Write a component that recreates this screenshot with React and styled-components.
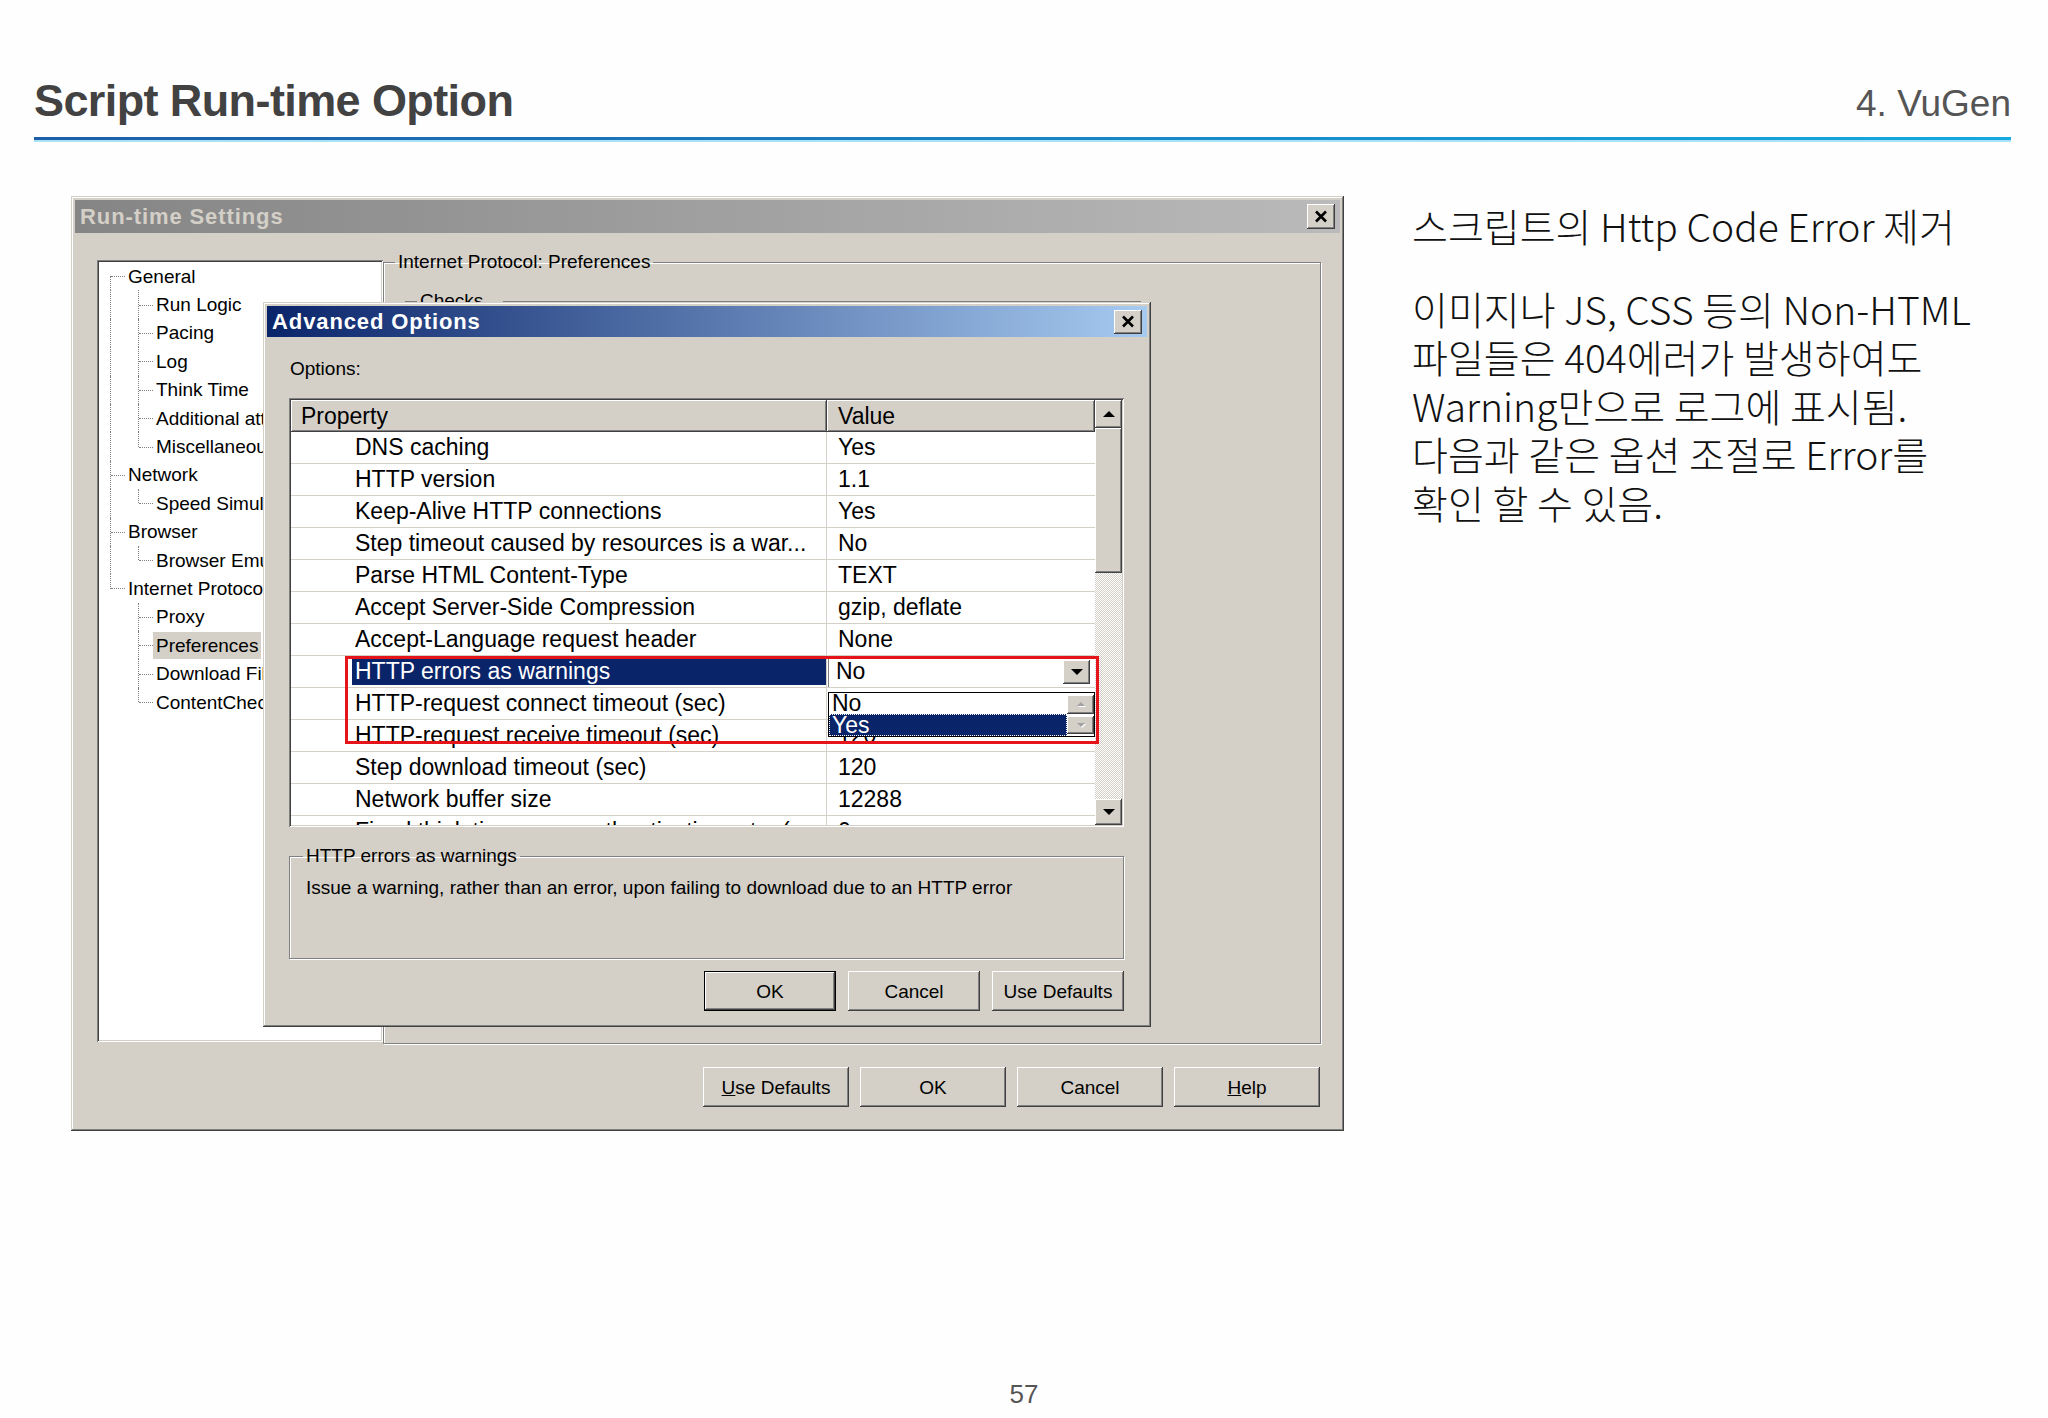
import React from "react";
import styled, { createGlobalStyle, css } from "styled-components";

const FACE = "#d4d0c8";
const SHADOW = "#808080";
const DARK = "#404040";
const NAVY = "#0a246a";
const UI_FONT = `"Liberation Sans", Arial, sans-serif`;

const GlobalStyle = createGlobalStyle`
  html, body {
    margin: 0;
    padding: 0;
    background: #fefefe;
  }
  body {
    width: 2048px;
    height: 1418px;
    overflow: hidden;
    font-family: ${UI_FONT};
  }
  #root {
    width: 2048px;
    height: 1418px;
  }
`;

const raised = css`
  background: ${FACE};
  box-shadow: inset -1px -1px ${DARK}, inset 1px 1px #fff, inset -2px -2px ${SHADOW},
    inset 2px 2px ${FACE};
`;

const sunken = css`
  box-shadow: inset 1px 1px ${SHADOW}, inset -1px -1px #fff, inset 2px 2px ${DARK},
    inset -2px -2px ${FACE};
`;

const etched = css`
  border: 1px solid ${SHADOW};
  box-shadow: 1px 1px 0 #fff, inset 1px 1px 0 #fff;
`;

/* ---------- slide frame ---------- */

const Page = styled.div`
  width: 2048px;
  height: 1418px;
  display: flex;
  flex-direction: column;
`;

const Header = styled.header`
  display: flex;
  justify-content: space-between;
  align-items: baseline;
  padding: 78px 37px 0 34px;
`;

const Title = styled.h1`
  margin: 0;
  font: bold 45px/46px ${UI_FONT};
  color: #424242;
  letter-spacing: -0.6px;
`;

const Chapter = styled.span`
  font: 37px/1 ${UI_FONT};
  color: #555;
`;

const Rule = styled.div`
  margin: 13px 37px 0 34px;
  height: 3px;
  background: linear-gradient(to right, #1d5ea8, #14a9e0);
  border-bottom: 2px solid #a9e2f6;
`;

const Main = styled.main`
  display: flex;
  align-items: flex-start;
  gap: 68px;
  margin-top: 54px;
  padding-left: 71px;
`;

const Notes = styled.aside`
  margin-top: 5px;
  font: 300 39px/48.5px "Noto Sans CJK KR", sans-serif;
  color: #111;
  white-space: nowrap;
`;

const NoteTitle = styled.p`
  margin: 0 0 34px;
`;

const NoteBody = styled.p`
  margin: 0;
`;

const PageNumber = styled.footer`
  margin-top: auto;
  padding-bottom: 9px;
  text-align: center;
  font: 26px/30px ${UI_FONT};
  color: #555;
`;

/* ---------- windows ---------- */

const Window = styled.section`
  width: ${(p) => p.$w}px;
  height: ${(p) => p.$h}px;
  box-sizing: border-box;
  padding: 4px;
  display: flex;
  flex-direction: column;
  background: ${FACE};
  box-shadow: inset -1px -1px ${DARK}, inset 1px 1px ${FACE}, inset -2px -2px ${SHADOW},
    inset 2px 2px #fff;
`;

const MainWindow = styled(Window)`
  position: relative;
`;

const Dialog = styled(Window)`
  position: absolute;
  left: 192px;
  top: 106px;
  z-index: 2;
`;

const TitleBar = styled.div`
  flex: none;
  height: ${(p) => p.$h}px;
  display: flex;
  align-items: center;
  justify-content: space-between;
  padding: 0 5px;
  background: ${(p) =>
    p.$active
      ? `linear-gradient(to right, ${NAVY}, #a6caf0)`
      : "linear-gradient(to right, #858585, #bababa)"};
  color: ${(p) => (p.$active ? "#fff" : FACE)};
  font: bold 22px/1 ${UI_FONT};
  letter-spacing: 0.9px;
`;

const CloseButton = styled.span`
  ${raised};
  width: 28px;
  height: ${(p) => p.$h}px;
  display: flex;
  align-items: center;
  justify-content: center;
`;

const Close = ({ h }) => (
  <CloseButton $h={h}>
    <svg width="14" height="13" viewBox="0 0 14 13">
      <path d="M2 1.5 L12 11.5 M12 1.5 L2 11.5" stroke="#000" strokeWidth="2.6" />
    </svg>
  </CloseButton>
);

const WindowBody = styled.div`
  display: flex;
  height: 794px;
  margin-top: 17px;
  padding: 0 18px 0 22px;
`;

const ButtonRow = styled.div`
  display: flex;
  justify-content: flex-end;
  gap: ${(p) => p.$gap}px;
  margin-top: ${(p) => p.$top}px;
  padding-right: ${(p) => p.$right}px;
`;

const Button = styled.button`
  ${raised};
  width: ${(p) => p.$w}px;
  height: 40px;
  border: none;
  padding: 0;
  font: 19px/1 ${UI_FONT};
  color: #000;
  ${(p) =>
    p.$default &&
    css`
      box-shadow: inset 0 0 0 1px #000, inset -2px -2px ${DARK}, inset 2px 2px #fff,
        inset -3px -3px ${SHADOW};
    `}
`;

/* ---------- tree view ---------- */

const Tree = styled.div`
  ${sunken};
  flex: none;
  width: 286px;
  height: 782px;
  margin-top: 10px;
  box-sizing: border-box;
  padding: 2px;
  background: #fff;
  overflow: hidden;
`;

const TreeRow = styled.div`
  display: flex;
  height: 28.4px;
`;

const Guide = styled.span`
  position: relative;
  flex: none;
  width: 28px;

  &::before {
    content: "";
    display: ${(p) => (p.$v === "none" ? "none" : "block")};
    position: absolute;
    left: 11px;
    top: ${(p) => (p.$v === "bottom" ? "50%" : "0")};
    bottom: ${(p) => (p.$v === "top" ? "50%" : "0")};
    border-left: 1px dotted ${SHADOW};
  }

  &::after {
    content: "";
    display: ${(p) => (p.$h ? "block" : "none")};
    position: absolute;
    left: 12px;
    width: 14px;
    top: 50%;
    border-top: 1px dotted ${SHADOW};
  }
`;

const TreeLabel = styled.span`
  align-self: center;
  margin-left: -2px;
  padding: 1px 3px;
  font: 19px/25px ${UI_FONT};
  color: #000;
  white-space: nowrap;
  background: ${(p) => (p.$selected ? FACE : "transparent")};
`;

const TREE = [
  { label: "General", guides: [{ v: "bottom", h: true }] },
  { label: "Run Logic", guides: [{ v: "full" }, { v: "full", h: true }] },
  { label: "Pacing", guides: [{ v: "full" }, { v: "full", h: true }] },
  { label: "Log", guides: [{ v: "full" }, { v: "full", h: true }] },
  { label: "Think Time", guides: [{ v: "full" }, { v: "full", h: true }] },
  { label: "Additional attributes", guides: [{ v: "full" }, { v: "full", h: true }] },
  { label: "Miscellaneous", guides: [{ v: "full" }, { v: "top", h: true }] },
  { label: "Network", guides: [{ v: "full", h: true }] },
  { label: "Speed Simulation", guides: [{ v: "full" }, { v: "top", h: true }] },
  { label: "Browser", guides: [{ v: "full", h: true }] },
  { label: "Browser Emulation", guides: [{ v: "full" }, { v: "top", h: true }] },
  { label: "Internet Protocol", guides: [{ v: "top", h: true }] },
  { label: "Proxy", guides: [{ v: "none" }, { v: "full", h: true }] },
  { label: "Preferences", guides: [{ v: "none" }, { v: "full", h: true }], selected: true },
  { label: "Download Filters", guides: [{ v: "none" }, { v: "full", h: true }] },
  { label: "ContentCheck", guides: [{ v: "none" }, { v: "top", h: true }] },
];

/* ---------- group boxes ---------- */

const GroupBox = styled.fieldset`
  ${etched};
  margin: 0;
  box-sizing: border-box;
  min-width: 0;
`;

const PageGroup = styled(GroupBox)`
  flex: none;
  width: 938px;
  height: 794px;
  padding: 0 11px;
`;

const ChecksGroup = styled(GroupBox)`
  width: 736px;
  height: 300px;
  margin: 15px 0 0 10px;
  padding: 0 11px;
`;

const HelpGroup = styled(GroupBox)`
  height: 115px;
  margin-top: 17px;
  padding: 0 13px;
`;

const Legend = styled.legend`
  padding: 0 ${(p) => p.$after || 3}px 0 3px;
  font: 19px/24px ${UI_FONT};
  color: #000;
`;

const HelpText = styled.p`
  margin: 0;
  padding: 8px 3px 0;
  font: 19px/24px ${UI_FONT};
  color: #000;
`;

/* ---------- advanced options ---------- */

const DialogContent = styled.div`
  display: flex;
  flex-direction: column;
  padding: 0 23px 0 22px;
`;

const FieldLabel = styled.div`
  margin-top: 20px;
  padding-left: 1px;
  font: 19px/24px ${UI_FONT};
  color: #000;
`;

const ListBox = styled.div`
  ${sunken};
  position: relative;
  height: 429px;
  margin-top: 17px;
  box-sizing: border-box;
  padding: 2px;
  display: flex;
  background: #fff;
`;

const TableArea = styled.div`
  flex: 1;
  overflow: hidden;
`;

const Grid = styled.div`
  display: grid;
  grid-template-columns: 536px 1fr;
  height: ${(p) => p.$h}px;
  box-sizing: border-box;
  font: 23px/1 ${UI_FONT};
  color: #000;
`;

const HeadCell = styled.div`
  ${raised};
  display: flex;
  align-items: center;
  padding-left: ${(p) => p.$pad}px;
`;

const Row = styled(Grid)`
  border-bottom: 1px solid ${FACE};
`;

const PropCell = styled.div`
  display: flex;
  align-items: center;
  padding-left: 61px;
  border-right: 1px solid ${FACE};
  white-space: nowrap;
  overflow: hidden;
`;

const PropText = styled.span`
  flex: 1;
  display: flex;
  align-items: center;
  height: 27px;
  padding-left: 3px;
  background: ${(p) => (p.$selected ? NAVY : "transparent")};
  color: ${(p) => (p.$selected ? "#fff" : "#000")};
`;

const ValueCell = styled.div`
  display: flex;
  align-items: center;
  padding-left: ${(p) => (p.$combo ? 1 : 11)}px;
  white-space: nowrap;
`;

const Combo = styled.div`
  width: 264px;
  height: 30px;
  box-sizing: border-box;
  display: flex;
  align-items: center;
  justify-content: space-between;
  padding: 2px 2px 2px 8px;
  background: #fff;
  box-shadow: inset 1px 1px ${SHADOW}, inset -1px -1px #fff;
`;

const ComboButton = styled.span`
  ${raised};
  width: 27px;
  height: 24px;
  display: flex;
  align-items: center;
  justify-content: center;
`;

const Arrow = styled.span`
  width: 0;
  height: 0;
  border-left: ${(p) => p.$s}px solid transparent;
  border-right: ${(p) => p.$s}px solid transparent;
  ${(p) => (p.$dir === "up" ? "border-bottom" : "border-top")}: ${(p) => p.$s}px solid
    ${(p) => p.$color || "#000"};
  ${(p) => p.$dim && "filter: drop-shadow(1px 1px 0 #fff);"}
`;

const ScrollBar = styled.div`
  flex: none;
  width: 27px;
  display: flex;
  flex-direction: column;
`;

const ScrollButton = styled.span`
  ${raised};
  flex: ${(p) => (p.$h ? "none" : 1)};
  height: ${(p) => (p.$h ? `${p.$h}px` : "auto")};
  display: flex;
  align-items: center;
  justify-content: center;
`;

const Thumb = styled.span`
  ${raised};
  height: 145px;
`;

const Track = styled.span`
  flex: 1;
  background-color: #fff;
  background-image: repeating-conic-gradient(${FACE} 0 25%, #fff 0 50%);
  background-size: 2px 2px;
`;

const DropList = styled.div`
  position: absolute;
  left: 539px;
  top: 294px;
  width: 267px;
  height: 45px;
  box-sizing: border-box;
  display: flex;
  border: 1px solid #000;
  background: #fff;
  z-index: 1;
`;

const DropItems = styled.div`
  flex: 1;
  display: flex;
  flex-direction: column;
  overflow: hidden;
`;

const DropItem = styled.div`
  height: ${(p) => p.$h}px;
  padding-left: 3px;
  font: 23px/${(p) => p.$h}px ${UI_FONT};
  background: ${(p) => (p.$selected ? NAVY : "#fff")};
  color: ${(p) => (p.$selected ? "#fff" : "#000")};
  outline: ${(p) => (p.$selected ? "1px dotted #fff" : "none")};
  outline-offset: -1px;
  overflow: hidden;
`;

const DropScroll = styled.div`
  flex: none;
  width: 27px;
  display: flex;
  flex-direction: column;
  gap: 2px;
  padding: 2px 0;
  background: #fff;
`;

const Highlight = styled.div`
  position: absolute;
  left: 56px;
  top: 258px;
  width: 754px;
  height: 88px;
  box-sizing: border-box;
  border: 3px solid #e5141b;
  z-index: 3;
  pointer-events: none;
`;

const OPTIONS = [
  ["DNS caching", "Yes"],
  ["HTTP version", "1.1"],
  ["Keep-Alive HTTP connections", "Yes"],
  ["Step timeout caused by resources is a war...", "No"],
  ["Parse HTML Content-Type", "TEXT"],
  ["Accept Server-Side Compression", "gzip, deflate"],
  ["Accept-Language request header", "None"],
  ["HTTP errors as warnings", "No", true],
  ["HTTP-request connect timeout (sec)", "120"],
  ["HTTP-request receive timeout (sec)", "120"],
  ["Step download timeout (sec)", "120"],
  ["Network buffer size", "12288"],
  ["Fixed think time upon authentication retry (...", "0"],
];

function OptionsList() {
  return (
    <ListBox>
      <TableArea>
        <Grid $h={32}>
          <HeadCell $pad={10}>Property</HeadCell>
          <HeadCell $pad={11}>Value</HeadCell>
        </Grid>
        {OPTIONS.map(([name, value, selected]) => (
          <Row key={name} $h={32}>
            <PropCell>
              <PropText $selected={selected}>{name}</PropText>
            </PropCell>
            <ValueCell $combo={selected}>
              {selected ? (
                <Combo>
                  {value}
                  <ComboButton>
                    <Arrow $dir="down" $s={6} />
                  </ComboButton>
                </Combo>
              ) : (
                value
              )}
            </ValueCell>
          </Row>
        ))}
      </TableArea>
      <ScrollBar>
        <ScrollButton $h={28}>
          <Arrow $dir="up" $s={6} />
        </ScrollButton>
        <Thumb />
        <Track />
        <ScrollButton $h={26}>
          <Arrow $dir="down" $s={6} />
        </ScrollButton>
      </ScrollBar>
      <DropList>
        <DropItems>
          <DropItem $h={21}>No</DropItem>
          <DropItem $h={22} $selected>
            Yes
          </DropItem>
        </DropItems>
        <DropScroll>
          <ScrollButton>
            <Arrow $dir="up" $s={4} $color="#a0a0a0" $dim />
          </ScrollButton>
          <ScrollButton>
            <Arrow $dir="down" $s={4} $color="#a0a0a0" $dim />
          </ScrollButton>
        </DropScroll>
      </DropList>
      <Highlight />
    </ListBox>
  );
}

function AdvancedOptions() {
  return (
    <Dialog $w={888} $h={725}>
      <TitleBar $active $h={31}>
        Advanced Options
        <Close h={24} />
      </TitleBar>
      <DialogContent>
        <FieldLabel>Options:</FieldLabel>
        <OptionsList />
        <HelpGroup>
          <Legend>HTTP errors as warnings</Legend>
          <HelpText>
            Issue a warning, rather than an error, upon failing to download due to an HTTP error
          </HelpText>
        </HelpGroup>
        <ButtonRow $gap={12} $top={12} $right={0}>
          <Button $w={132} $default>
            OK
          </Button>
          <Button $w={132}>Cancel</Button>
          <Button $w={132}>Use Defaults</Button>
        </ButtonRow>
      </DialogContent>
    </Dialog>
  );
}

function RuntimeSettings() {
  return (
    <MainWindow $w={1273} $h={935}>
      <TitleBar $h={33}>
        Run-time Settings
        <Close h={25} />
      </TitleBar>
      <WindowBody>
        <Tree>
          {TREE.map((node) => (
            <TreeRow key={node.label}>
              {node.guides.map((g, i) => (
                <Guide key={i} $v={g.v} $h={g.h} />
              ))}
              <TreeLabel $selected={node.selected}>{node.label}</TreeLabel>
            </TreeRow>
          ))}
        </Tree>
        <PageGroup>
          <Legend>Internet Protocol: Preferences</Legend>
          <ChecksGroup>
            <Legend $after={20}>Checks</Legend>
          </ChecksGroup>
        </PageGroup>
      </WindowBody>
      <ButtonRow $gap={11} $top={23} $right={20}>
        <Button $w={146}>
          <u>U</u>se Defaults
        </Button>
        <Button $w={146}>OK</Button>
        <Button $w={146}>Cancel</Button>
        <Button $w={146}>
          <u>H</u>elp
        </Button>
      </ButtonRow>
      <AdvancedOptions />
    </MainWindow>
  );
}

export default function App() {
  return (
    <Page>
      <GlobalStyle />
      <Header>
        <Title>Script Run-time Option</Title>
        <Chapter>4. VuGen</Chapter>
      </Header>
      <Rule />
      <Main>
        <RuntimeSettings />
        <Notes>
          <NoteTitle>스크립트의 Http Code Error 제거</NoteTitle>
          <NoteBody>
            이미지나 JS, CSS 등의 Non-HTML
            <br />
            파일들은 404에러가 발생하여도
            <br />
            Warning만으로 로그에 표시됨.
            <br />
            다음과 같은 옵션 조절로 Error를
            <br />
            확인 할 수 있음.
          </NoteBody>
        </Notes>
      </Main>
      <PageNumber>57</PageNumber>
    </Page>
  );
}
